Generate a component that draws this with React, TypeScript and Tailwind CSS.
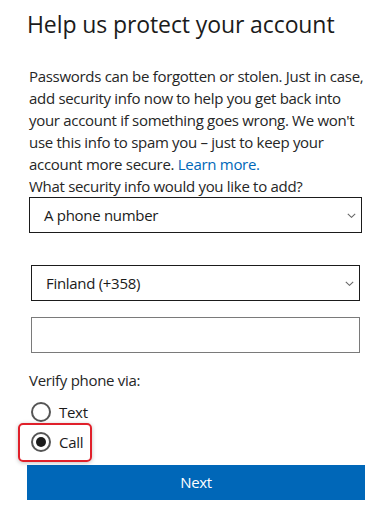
import { useState } from "react";

function Chevron() {
  return (
    <svg width="9" height="5" viewBox="0 0 9 5" className="shrink-0">
      <path d="M0.8 0.8l3.7 3.5 3.7-3.5" fill="none" stroke="#666" strokeWidth="1.1" />
    </svg>
  );
}

function Radio({ label, checked }: { label: string; checked: boolean }) {
  return (
    <div className="flex items-center gap-[8px] h-[30px]">
      <span className="w-[20px] h-[20px] rounded-full border-2 border-[#555] flex items-center justify-center">
        {checked && <span className="w-[10px] h-[10px] rounded-full bg-[#1b1b1b]" />}
      </span>
      <span className="text-[15px] text-[#1b1b1b]">{label}</span>
    </div>
  );
}

export default function App() {
  const [method] = useState("call");
  return (
    <div
      className="w-[379px] h-[518px] bg-white overflow-hidden pl-[29px] pr-[17px] tracking-[-0.3px]"
      style={{ fontFamily: '"Open Sans", "Noto Sans", sans-serif' }}
    >
      <h1 className="text-[23px] leading-[32px] text-[#1b1b1b] pt-[8px] -ml-[2px] tracking-[-0.1px]">
        Help us protect your account
      </h1>
      <p className="mt-[25px] text-[15px] leading-[22px] text-[#262626] whitespace-nowrap">
        Passwords can be forgotten or stolen. Just in case,
        <br />
        add security info now to help you get back into
        <br />
        your account if something goes wrong. We won't
        <br />
        use this info to spam you – just to keep your
        <br />
        account more secure. <a className="text-[#0067b8]">Learn more.</a>
      </p>
      <div className="text-[15px] leading-[22px] text-[#262626]">What security info would you like to add?</div>
      <div className="h-[36px] border border-[#1b1b1b] flex items-center justify-between pl-[14px] pr-[5px] text-[15px] text-[#1b1b1b]">
        <span>A phone number</span>
        <Chevron />
      </div>
      <div className="mx-[2px] mt-[32px] h-[36px] border border-[#1b1b1b] flex items-center justify-between pl-[14px] pr-[5px] text-[15px] text-[#1b1b1b]">
        <span>Finland (+358)</span>
        <Chevron />
      </div>
      <div className="mx-[2px] mt-[16px] h-[36px] border border-[#7a7a7a]" />
      <div className="mt-[16px] text-[15px] leading-[22px] text-[#262626]">Verify phone via:</div>
      <div className="mt-[6px] pl-[2px]">
        <Radio label="Text" checked={method === "text"} />
        <div className="relative">
          <Radio label="Call" checked={method === "call"} />
          <span className="absolute left-[-13px] top-[-4px] w-[74px] h-[39px] rounded-[5px] border-2 border-[#e0202a] shadow-[0_1px_4px_rgba(0,0,0,0.25)]" />
        </div>
      </div>
      <button className="-mx-[2px] mt-[8px] w-[338px] h-[35px] bg-[#0067b8] text-white text-[15px] flex items-center justify-center">
        Next
      </button>
    </div>
  );
}
